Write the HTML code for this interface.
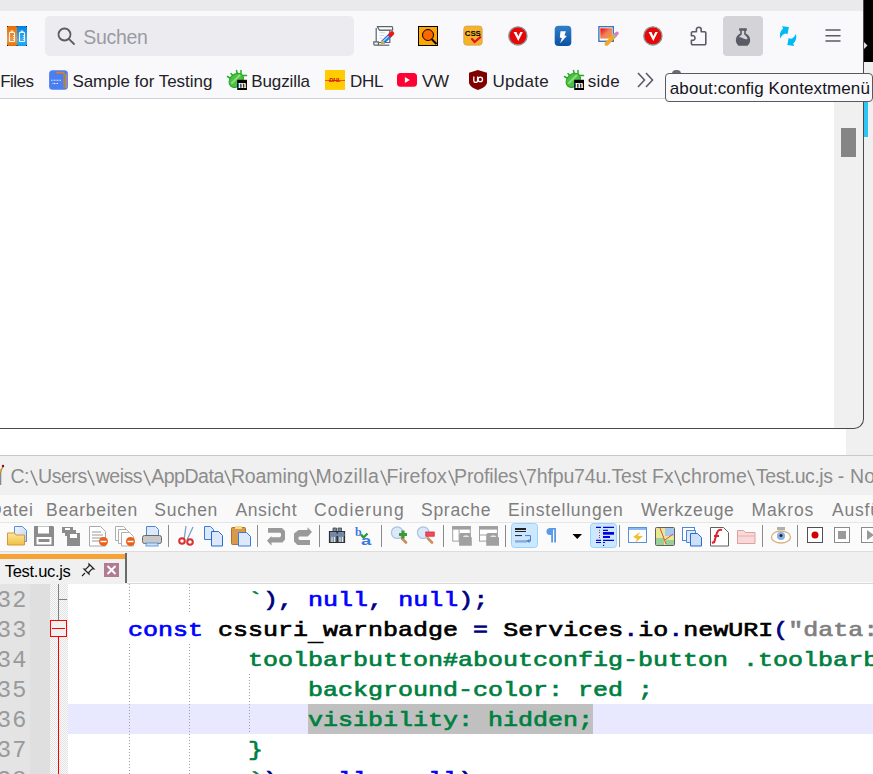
<!DOCTYPE html>
<html><head><meta charset="utf-8">
<style>
*{margin:0;padding:0;box-sizing:border-box}
html,body{width:873px;height:774px;overflow:hidden;background:#fff;position:relative;font-family:"Liberation Sans",sans-serif}
.a{position:absolute}
svg{position:absolute;overflow:visible}
#tabstrip{left:0;top:0;width:863px;height:11px;background:#eaeaed}
#toolbar{left:0;top:11px;width:863px;height:51px;background:#f9f9fb}
#bmbar{left:0;top:62px;width:863px;height:36px;background:#f9f9fb}
#sep{left:0;top:98px;width:863px;height:1px;background:#d0d0d6}
#content{left:0;top:99px;width:862px;height:329px;background:#fff}
#blk{left:863px;top:0;width:10px;height:62px;background:#000}
#rgray{left:863px;top:62px;width:10px;height:393px;background:#f0f0f0}
#below{left:846px;top:428px;width:27px;height:27px;background:#f0f0f0}
#scroll{left:834px;top:99px;width:29px;height:329px;background:#f0f0f0}
#thumb{left:841px;top:128px;width:15px;height:29px;background:#858585}
#winborder{left:-20px;top:-2px;width:884px;height:431px;border:1px solid #4a4a4a;border-radius:0 0 10px 0;border-top:none;border-left:none}
#search{left:45px;top:16px;width:309px;height:40px;background:#ececf0;border-radius:5px}
#suchen{top:26px;font-size:19.5px;color:#9a9aa4}
.bm{top:72px;font-size:17px;color:#222228;white-space:nowrap}
#hl{left:723px;top:16px;width:40px;height:40px;background:#d3d3d8;border-radius:4px}
#tip{left:665px;top:73px;width:208px;height:29px;background:#f9f9fb;border:1px solid #5a5a5a;border-radius:4px}
#tiptext{top:79px;font-size:17px;color:#15141a;white-space:nowrap}
#npp{left:0;top:455px;width:873px;height:319px;background:#f0f0f0}
#titleline{left:0;top:455px;width:873px;height:1px;background:#c8c8c8}
svg.bsv{position:static;display:inline-block;vertical-align:-3px;margin:0 0.5px}
.tt{top:465px;font-size:19.5px;color:#8c8c8c;white-space:nowrap}
#menubar{left:0;top:495px;width:873px;height:28px;background:#f9f9f9}
.mn{top:500px;font-size:17.5px;color:#7e7e7e;white-space:nowrap}
#tb{left:0;top:522px;width:873px;height:30px;background:#fbfbfb;border-top:1px solid #e6e6e6;border-bottom:1px solid #dddddd}
#tabbar{left:0;top:552px;width:873px;height:32px;background:#f0f0f0}
#tab{left:0;top:553px;width:127px;height:30px;background:#f0f0f0;border-right:2px solid #6a6a6a}
#orange{left:0;top:554px;width:125px;height:5px;background:#f6a234}
#tabtext{top:562px;font-size:16.5px;color:#000;white-space:nowrap}
#code{left:0;top:584px;width:873px;height:190px;background:#fff}
#lnm{left:0;top:584px;width:30px;height:190px;background:#e4e4e4}
#bkm{left:30px;top:584px;width:20px;height:190px;background:#dfdfdf}
#fold{left:50px;top:584px;width:18px;height:190px;background:repeating-conic-gradient(#fbfbfb 0 25%,#e2e2e2 0 50%) 0 0/2px 2px}
.ln{left:-3px;font-family:"Liberation Mono",monospace;font-size:23.5px;letter-spacing:1.2px;line-height:30px;color:#9a9a9a;width:30px;text-align:right;white-space:pre}
.cl{left:68px;font-family:"Liberation Mono",monospace;font-weight:normal;-webkit-text-stroke:0.8px;font-size:25px;line-height:30px;transform:scaleY(0.8);transform-origin:0 0;white-space:pre;color:#000}
.g{color:#008040}.n{color:#000080}.b{color:#0000ff}.s{color:#808080}
.guide{width:1px;background:repeating-linear-gradient(#a0a0a0 0 1px,transparent 1px 3px)}
.sepv{width:1px;height:22px;top:527px;background:#a0a0a0}
</style></head><body>
<div class="a" id="tabstrip"></div>
<div class="a" id="toolbar"></div>
<div class="a" id="bmbar"></div>
<div class="a" id="sep"></div>
<div class="a" id="content"></div>
<div class="a" id="scroll"></div>
<div class="a" id="thumb"></div>
<div class="a" id="blk"></div><svg style="left:864px;top:42px" width="4" height="7" viewBox="0 0 4 7"><path d="M0 0l3.5 3.5L0 7z" fill="#e0e0e0"/></svg>
<div class="a" id="rgray"></div>
<div class="a" style="left:864px;top:101px;width:4px;height:36px;background:#2ec4f6"></div>
<div class="a" id="below"></div>
<div class="a" id="winborder"></div>

<!-- toolbar -->
<svg style="left:7px;top:26px" width="20" height="20" viewBox="0 0 20 20">
 <defs><linearGradient id="go" x1="0" y1="0" x2="0" y2="1"><stop offset="0" stop-color="#e86e00"/><stop offset="0.7" stop-color="#e89a50"/><stop offset="1" stop-color="#e86e00"/></linearGradient>
 <linearGradient id="gb" x1="0" y1="0" x2="0" y2="1"><stop offset="0" stop-color="#0080e0"/><stop offset="0.7" stop-color="#40b0f0"/><stop offset="1" stop-color="#10a0f0"/></linearGradient></defs>
 <rect x="0" y="0" width="10" height="20" fill="url(#go)"/><rect x="10" y="0" width="10" height="20" fill="url(#gb)"/>
 <path d="M0 0h1v1H0zM19 0h1v1h-1zM0 19h1v1H0zM19 19h1v1h-1zM9.5 0h1v1h-1zM9.5 19h1v1h-1z" fill="#222"/>
 <path d="M2.5 6.5h5v9h-5zM4 6.5v-1.5h2v1.5M12.5 6.5h5v9h-5zM14 6.5v-1.5h2v1.5" fill="none" stroke="#fff" stroke-width="0.9"/>
 <path d="M6.5 9v.8M6.5 11v.8M6.5 13v.8M16.5 9v.8M16.5 11v.8M16.5 13v.8" stroke="#fff" stroke-width="0.9"/>
</svg>
<div class="a" id="search"></div>
<svg style="left:57px;top:27px" width="18" height="18" viewBox="0 0 18 18">
 <circle cx="7.5" cy="7.5" r="6" fill="none" stroke="#5b5b66" stroke-width="1.8"/><path d="M11.8 11.8L17 17" stroke="#5b5b66" stroke-width="1.8" stroke-linecap="round"/>
</svg>
<div class="a" id="suchen" style="left:83.30px;letter-spacing:-0.34px">Suchen</div>

<svg style="left:369px;top:22px" width="30" height="28" viewBox="0 0 30 28">
 <path d="M7.2 6V20.5H20.8V8.2H10" fill="#fafcfe" stroke="#5c646c" stroke-width="1.2"/>
 <path d="M8.3 4.6H22.8A0.9 0.9 0 0 1 23.6 5.5V8.2H10.5Z" fill="#fff" stroke="#5c646c" stroke-width="1.2" stroke-linejoin="round"/>
 <path d="M4.8 19.8H9.5V23.2H5.8A1.2 1.2 0 0 1 4.8 22Z" fill="#f0f2f4" stroke="#5c646c" stroke-width="1.2"/>
 <path d="M9.5 23.2H20.3" stroke="#5c646c" stroke-width="1.2"/>
 <path d="M10.5 10.7H16M10.5 13.5H15M10.5 16.2H13" stroke="#c8d0dc" stroke-width="0.9"/>
 <path d="M13.5 20.5L21.8 12.6" stroke="#2a78e0" stroke-width="4.4"/><path d="M13.8 19.6L21.2 12.6" stroke="#a0e0f8" stroke-width="1.2"/>
 <path d="M21.3 13L23 11.4" stroke="#e81818" stroke-width="4.4" stroke-linecap="round"/>
 <path d="M11.2 23L13.2 18.2L16.2 21.2Z" fill="#d8a848"/>
</svg>
<svg style="left:418px;top:26px" width="20" height="20" viewBox="0 0 20 20">
 <rect x="0.5" y="0.5" width="19" height="19" fill="#ffa500" stroke="#000"/>
 <circle cx="10" cy="9" r="5.5" fill="#ff6600" stroke="#000" stroke-width="1"/><path d="M13.5 13l5 5" stroke="#000" stroke-width="2"/>
</svg>
<svg style="left:459px;top:22px" width="30" height="28" viewBox="0 0 30 28">
 <rect x="4.7" y="4" width="18.5" height="19.2" rx="3" fill="#f5b428" stroke="#c89060" stroke-width="0.6"/>
 <text x="13.8" y="13.7" font-family="Liberation Sans" font-weight="bold" font-size="8" text-anchor="middle" fill="#000" letter-spacing="-0.2">CSS</text>
 <path d="M13 17L15.6 20L21.3 15.2" fill="none" stroke="#e01030" stroke-width="2.2" stroke-linecap="round"/>
</svg>
<svg style="left:504px;top:22px" width="30" height="28" viewBox="0 0 30 28">
 <circle cx="13.9" cy="13.9" r="9.1" fill="#e60808" stroke="#8a9292" stroke-width="1.3"/>
 <path d="M9.6 10.1H12.5L14.3 14.2L16.3 10.1H18.8L14.3 19Z" fill="#fff"/>
</svg>
<svg style="left:550px;top:22px" width="30" height="28" viewBox="0 0 30 28">
 <defs><linearGradient id="lg1" x1="0" y1="0" x2="0" y2="1"><stop offset="0" stop-color="#3080c8"/><stop offset="1" stop-color="#0a52a2"/></linearGradient></defs>
 <rect x="4.7" y="3.8" width="16.6" height="20.2" rx="3.8" fill="url(#lg1)"/>
 <path d="M10.5 9.2H15.9L14.5 13.4L16.8 14.1L10.1 21.3L11.9 15.9L9.8 15.6Z" fill="#fff"/>
</svg>
<svg style="left:594px;top:22px" width="30" height="28" viewBox="0 0 30 28">
 <defs><linearGradient id="lg2" x1="0" y1="0" x2="1" y2="1"><stop offset="0" stop-color="#f00000"/><stop offset="0.5" stop-color="#f08060"/><stop offset="1" stop-color="#f0a020"/></linearGradient></defs>
 <rect x="4.9" y="4.7" width="14.4" height="14.6" fill="#fff" stroke="#3c78b8" stroke-width="1.4"/>
 <rect x="6.3" y="6.3" width="11.8" height="10.3" fill="url(#lg2)"/>
 <path d="M12.5 21.8L21 13.3" stroke="#f0a828" stroke-width="4" stroke-linecap="round"/><path d="M21 13.3L23 11.3" stroke="#d080c0" stroke-width="3.6" stroke-linecap="round"/><path d="M19.8 14.5L21.2 13.1" stroke="#b0b0b0" stroke-width="4"/>
</svg>
<svg style="left:639px;top:22px" width="30" height="28" viewBox="0 0 30 28">
 <circle cx="13.9" cy="13.9" r="9.1" fill="#e60808" stroke="#8a9292" stroke-width="1.3"/>
 <path d="M9.6 10.1H12.5L14.3 14.2L16.3 10.1H18.8L14.3 19Z" fill="#fff"/>
</svg>
<svg style="left:684px;top:22px" width="30" height="28" viewBox="0 0 30 28">
 <path d="M8.6 9.8H12.4V7.6A2.4 2.4 0 0 1 17.2 7.6V9.8H20.6A1.2 1.2 0 0 1 21.8 11V21.6A1.2 1.2 0 0 1 20.6 22.8H8.6A1.2 1.2 0 0 1 7.4 21.6V18.2H9.6A2.4 2.4 0 0 0 9.6 13.8H7.4V11A1.2 1.2 0 0 1 8.6 9.8Z" fill="none" stroke="#5b5b66" stroke-width="1.6" stroke-linejoin="round"/>
</svg>
<div class="a" id="hl"></div>
<svg style="left:728px;top:22px" width="30" height="28" viewBox="0 0 30 28">
 <path d="M11.2 6.2H18.8V8.8H17.8V11.6A7.1 7.1 0 0 1 19.5 23.7H10.5A7.1 7.1 0 0 1 12.2 11.6V8.8H11.2Z" fill="#5b5b66"/>
 <path d="M13.8 8.8H16.2V12.6L17.4 13.4A5.3 5.3 0 0 1 19.6 16.8C18.5 17.6 17 17.4 15.5 16.6C13.5 15.6 11.8 15 10.8 15.4A5.3 5.3 0 0 1 12.6 13.4L13.8 12.6Z" fill="#d3d3d8"/>
</svg>
<svg style="left:773px;top:22px" width="30" height="28" viewBox="0 0 30 28">
 <g fill="#00b9f5"><path d="M7.2 16.5C6.3 12.5 7.3 8.8 10 6.6L9 4.3L15.9 5.1L14.5 12.3L12.8 11.4C10.5 11.6 8.5 13.5 7.2 16.5Z"/><path d="M7.2 16.5C6.3 12.5 7.3 8.8 10 6.6L9 4.3L15.9 5.1L14.5 12.3L12.8 11.4C10.5 11.6 8.5 13.5 7.2 16.5Z" transform="rotate(180 15.1 14.1)"/></g>
</svg>
<svg style="left:825px;top:29px" width="16" height="13" viewBox="0 0 16 13">
 <path d="M1 1.1h14M1 6.7h14M1 11.9h14" stroke="#5b5b66" stroke-width="1.5" stroke-linecap="round"/>
</svg>

<!-- bookmarks -->
<div class="a bm" id="b1" style="left:0.20px;letter-spacing:-0.55px">Files</div>
<svg style="left:44px;top:66px" width="28" height="28" viewBox="0 0 28 28">
 <rect x="5.1" y="4.2" width="18.8" height="19.5" rx="3.5" fill="#4a7ff2"/>
 <path d="M12 6.6H18.8A1.5 1.5 0 0 1 20.3 8.1V22" fill="none" stroke="#e8782a" stroke-width="1.6"/>
 <path d="M21.2 7.5V22.5" stroke="#5a8a2a" stroke-width="0.9"/><path d="M22.1 7.8V22.3" stroke="#d8c070" stroke-width="0.8"/><path d="M22.8 8.3V22" stroke="#c87090" stroke-width="0.6"/>
 <path d="M7 14.3h10M8.5 17.5h6" stroke="#dfe8ff" stroke-width="1.1" stroke-dasharray="1 0.5"/>
</svg>
<div class="a bm" id="b2" style="left:72.40px;letter-spacing:-0.03px">Sample for Testing</div>
<svg style="left:220px;top:64px" width="30" height="30" viewBox="0 0 30 30">
 <g stroke="#22b022" stroke-width="1.5" stroke-linecap="round"><path d="M7.5 12.5L11.5 15"/><path d="M11 9.5L13.5 12.5"/><path d="M16.5 6.5L17.5 10.5"/><path d="M21 6.5V10"/><path d="M26.5 11.5H22.5"/></g>
 <ellipse cx="16.2" cy="16.3" rx="8" ry="6.2" transform="rotate(-45 16.2 16.3)" fill="#4cc040" stroke="#22a022" stroke-width="1"/>
 <path d="M12 19L19.5 11.5" stroke="#9ee090" stroke-width="2.2" stroke-linecap="round" opacity="0.8"/>
 <rect x="17.2" y="15.8" width="9.8" height="10.2" fill="#000"/>
 <text x="22.1" y="24" font-family="Liberation Serif" font-weight="bold" font-size="10" text-anchor="middle" fill="#fff">m</text>
</svg>
<div class="a bm" id="b3" style="left:251.20px;letter-spacing:-0.10px">Bugzilla</div>
<svg style="left:320px;top:66px" width="28" height="28" viewBox="0 0 28 28">
 <rect x="5" y="4" width="20" height="19.9" fill="#ffcc00"/>
 <path d="M5 14.5H25" stroke="#e85818" stroke-width="1"/>
 <text x="14.8" y="15.6" font-family="Liberation Sans" font-weight="bold" font-style="italic" font-size="6" text-anchor="middle" fill="#d40511" letter-spacing="-0.3">DHL</text>
</svg>
<div class="a bm" id="b4" style="left:350px;letter-spacing:-0.3px">DHL</div>
<svg style="left:393px;top:66px" width="28" height="28" viewBox="0 0 28 28">
 <rect x="4" y="6.9" width="20" height="13.9" rx="3.5" fill="#ff0033"/><path d="M11.9 10.9L16.8 13.9L11.9 17Z" fill="#fff"/>
</svg>
<div class="a bm" id="b5" style="left:422px;letter-spacing:-0.3px">VW</div>
<svg style="left:464px;top:66px" width="28" height="28" viewBox="0 0 28 28">
 <path d="M13.9 4L23 6.7V16.3C23 19.5 19 22.5 13.9 23.9C8.8 22.5 5 19.5 5 16.3V6.7Z" fill="#800000"/>
 <path d="M9.8 10.5V14.5A1.9 1.9 0 0 0 13.6 14.5V10.5" fill="none" stroke="#fff" stroke-width="1.3"/><circle cx="16.3" cy="13.4" r="2.2" fill="none" stroke="#fff" stroke-width="1.3"/>
</svg>
<div class="a bm" id="b6" style="left:492.40px;letter-spacing:0.32px">Update</div>
<svg style="left:557px;top:64px" width="30" height="30" viewBox="0 0 30 30">
 <g stroke="#22b022" stroke-width="1.5" stroke-linecap="round"><path d="M7.5 12.5L11.5 15"/><path d="M11 9.5L13.5 12.5"/><path d="M16.5 6.5L17.5 10.5"/><path d="M21 6.5V10"/><path d="M26.5 11.5H22.5"/></g>
 <ellipse cx="16.2" cy="16.3" rx="8" ry="6.2" transform="rotate(-45 16.2 16.3)" fill="#4cc040" stroke="#22a022" stroke-width="1"/>
 <path d="M12 19L19.5 11.5" stroke="#9ee090" stroke-width="2.2" stroke-linecap="round" opacity="0.8"/>
 <rect x="17.2" y="15.8" width="9.8" height="10.2" fill="#000"/>
 <text x="22.1" y="24" font-family="Liberation Serif" font-weight="bold" font-size="10" text-anchor="middle" fill="#fff">m</text>
</svg>
<div class="a bm" id="b7" style="left:587.70px;letter-spacing:0.24px">side</div>
<svg style="left:637px;top:72px" width="17" height="16" viewBox="0 0 17 16">
 <path d="M1 1l6.5 7L1 15M9 1l6.5 7L9 15" fill="none" stroke="#5b5b66" stroke-width="1.6"/>
</svg>
<div class="a" style="left:672px;top:70px;width:9px;height:6px;border-radius:4px 4px 0 0;background:#6a6a72"></div>
<div class="a" id="tip"></div><div class="a" id="tiptext" style="left:669.80px;letter-spacing:0.11px">about:config Kontextmenü</div>

<!-- notepad++ -->
<div class="a" id="npp"></div>
<div class="a" id="titleline"></div>
<svg style="left:0;top:460px" width="6" height="30" viewBox="0 0 6 30"><path d="M0.6 12V25" stroke="#8a8a8a" stroke-width="1.4"/><path d="M3.2 6.5L0.8 10.5" stroke="#8090a8" stroke-width="1.3"/><circle cx="0.6" cy="10.8" r="1.6" fill="#f0a010"/><circle cx="3" cy="6" r="1.2" fill="#a00000"/></svg>
<div class="a tt" id="t1" style="left:10.50px;letter-spacing:-0.464px">C:<svg class="bsv" width="8" height="16" viewBox="0 0 8 16"><path d="M0.8 0.5L7.2 15.5" stroke="#8a8a8a" stroke-width="1.6"/></svg>Users<svg class="bsv" width="8" height="16" viewBox="0 0 8 16"><path d="M0.8 0.5L7.2 15.5" stroke="#8a8a8a" stroke-width="1.6"/></svg>weiss<svg class="bsv" width="8" height="16" viewBox="0 0 8 16"><path d="M0.8 0.5L7.2 15.5" stroke="#8a8a8a" stroke-width="1.6"/></svg>AppData<svg class="bsv" width="8" height="16" viewBox="0 0 8 16"><path d="M0.8 0.5L7.2 15.5" stroke="#8a8a8a" stroke-width="1.6"/></svg></div><div class="a tt" id="t1b" style="left:230.90px;letter-spacing:-0.110px">Roaming<svg class="bsv" width="8" height="16" viewBox="0 0 8 16"><path d="M0.8 0.5L7.2 15.5" stroke="#8a8a8a" stroke-width="1.6"/></svg></div><div class="a tt" id="t2" style="left:315.40px;letter-spacing:0.448px">Mozilla<svg class="bsv" width="8" height="16" viewBox="0 0 8 16"><path d="M0.8 0.5L7.2 15.5" stroke="#8a8a8a" stroke-width="1.6"/></svg></div><div class="a tt" id="t2b" style="left:386.40px;letter-spacing:0.147px">Firefox<svg class="bsv" width="8" height="16" viewBox="0 0 8 16"><path d="M0.8 0.5L7.2 15.5" stroke="#8a8a8a" stroke-width="1.6"/></svg></div><div class="a tt" id="t3" style="left:454.00px;letter-spacing:-0.129px">Profiles<svg class="bsv" width="8" height="16" viewBox="0 0 8 16"><path d="M0.8 0.5L7.2 15.5" stroke="#8a8a8a" stroke-width="1.6"/></svg></div><div class="a tt" id="t3b" style="left:526.00px;letter-spacing:-0.144px">7hfpu74u.Test Fx<svg class="bsv" width="8" height="16" viewBox="0 0 8 16"><path d="M0.8 0.5L7.2 15.5" stroke="#8a8a8a" stroke-width="1.6"/></svg></div><div class="a tt" id="t4" style="left:681.10px;letter-spacing:0.130px">chrome<svg class="bsv" width="8" height="16" viewBox="0 0 8 16"><path d="M0.8 0.5L7.2 15.5" stroke="#8a8a8a" stroke-width="1.6"/></svg></div><div class="a tt" id="t4b" style="left:756.00px;letter-spacing:-0.485px">Test.uc.js</div><div class="a tt" id="t5" style="left:837.80px;letter-spacing:0.160px">- Notepad++</div>
<div class="a" id="menubar"></div>
<div class="a mn" id="m0" style="left:-11px;letter-spacing:0.78px">Datei</div>
<div class="a mn" id="m1" style="left:46.00px;letter-spacing:0.72px">Bearbeiten</div>
<div class="a mn" id="m2" style="left:154.30px;letter-spacing:0.74px">Suchen</div>
<div class="a mn" id="m3" style="left:235.40px;letter-spacing:0.62px">Ansicht</div>
<div class="a mn" id="m4" style="left:314.00px;letter-spacing:1.12px">Codierung</div>
<div class="a mn" id="m5" style="left:421.00px;letter-spacing:0.72px">Sprache</div>
<div class="a mn" id="m6" style="left:508px;letter-spacing:0.8px">Einstellungen</div>
<div class="a mn" id="m7" style="left:641.00px;letter-spacing:0.57px">Werkzeuge</div>
<div class="a mn" id="m8" style="left:751.50px;letter-spacing:0.90px">Makros</div>
<div class="a mn" id="m9" style="left:832px;letter-spacing:0.78px">Ausführen</div>
<div class="a" id="tb"></div>
<svg style="left:0;top:522px" width="873" height="30" viewBox="0 522 873 30">
<defs>
 <linearGradient id="fold" x1="0" y1="0" x2="0" y2="1"><stop offset="0" stop-color="#fbe7a0"/><stop offset="1" stop-color="#f0c040"/></linearGradient>
 <linearGradient id="blu" x1="0" y1="0" x2="1" y2="1"><stop offset="0" stop-color="#f0f6fe"/><stop offset="1" stop-color="#b9d4f4"/></linearGradient>
</defs>
<!-- open -->
<path d="M14.5 526.5h8l4 4v11h-12z" fill="url(#blu)" stroke="#5a8ed8"/>
<path d="M7.5 533h7l1.5 2h8.5v10h-17z" fill="url(#fold)" stroke="#e0923a"/>
<!-- save -->
<path d="M34 526h19l1 1v19H34z" fill="#8c8c8c"/><rect x="38" y="526.5" width="11" height="7" fill="#fff"/><rect x="36.5" y="537" width="15" height="7.5" fill="#fff"/><rect x="38.5" y="539" width="11" height="3" fill="#8c8c8c"/>
<!-- save all -->
<path d="M62 527h11v6h-11z" fill="#8c8c8c"/><path d="M65 530h11v6h-11z" fill="#8c8c8c"/><path d="M67 533h13v13H67z" fill="#8c8c8c"/><rect x="70" y="534" width="7" height="4" fill="#fff"/><rect x="65" y="528" width="5" height="2" fill="#fff"/>
<!-- close -->
<path d="M89.5 526.5h11l5 5v14.5h-16z" fill="#fff" stroke="#a8a8a8"/><path d="M92 532h9M92 535h11M92 538h11M92 541h7" stroke="#9a9a9a" stroke-width="1.2"/>
<circle cx="103.5" cy="541.5" r="4.5" fill="#e8601a"/><path d="M100.5 541.5h6" stroke="#fff" stroke-width="1.5"/>
<!-- close all -->
<path d="M115.5 526.5h8l3 3v11h-11z" fill="#fff" stroke="#b0b0b0"/><path d="M118.5 529.5h8l3 3v11h-11z" fill="#fff" stroke="#b0b0b0"/><path d="M121.5 532.5h8l4 4v9.5h-12z" fill="#fff" stroke="#b0b0b0"/>
<circle cx="130.5" cy="541.5" r="4.5" fill="#e8601a"/><path d="M127.5 541.5h6" stroke="#fff" stroke-width="1.5"/>
<!-- print -->
<path d="M146.5 526.5h9l3 3v6h-12z" fill="#dbe9fb" stroke="#4a88d8"/><rect x="142.5" y="535.5" width="19" height="8" rx="2" fill="#c8c8c8" stroke="#6a6a6a"/><rect x="146" y="543" width="12" height="3" fill="#cde0f8" stroke="#4a88d8" stroke-width="0.8"/>
<!-- sep -->
<path d="M168.5 525v22M257.5 525v22M319.5 525v22M381.5 525v22M443.5 525v22M505.5 525v22M619.5 525v22M762.5 525v22M797.5 525v22" stroke="#8a8a8a"/>
<!-- cut -->
<path d="M186 526l-2 14M193 527l-6 13" stroke="#7aa0d0" stroke-width="1.3"/><circle cx="182" cy="541" r="2.8" fill="none" stroke="#d83030" stroke-width="2"/><circle cx="190" cy="542" r="2.8" fill="none" stroke="#d83030" stroke-width="2"/>
<!-- copy -->
<path d="M204.5 526.5h6l3 3v10h-9z" fill="#dbe9fb" stroke="#3a7ad8"/><path d="M211.5 531.5h7l4 4v10.5h-11z" fill="#dbe9fb" stroke="#2a6ad0"/>
<!-- paste -->
<rect x="231.5" y="527.5" width="14" height="17" rx="1" fill="#d89a48" stroke="#b07030"/><rect x="235" y="526" width="7" height="3" fill="#f6d890"/><path d="M238.5 532.5h8l4 4v9.5h-12z" fill="#dbe9fb" stroke="#3a7ad8"/>
<!-- undo -->
<path d="M268 528H282L285 531V539.5L282.5 542.5H271.5V545.7L267 540.8L271.4 536V537.2H280L281 536V533.5L280 532.8H268Z" fill="#9a9a9a"/>
<!-- redo -->
<path d="M298.5 530H307.5V527.2L312 532L307.5 536.8V536.4H299.5L298.5 537.5V539L299.5 540H310V545H297.5L294 541.5V533.5Z" fill="#9a9a9a"/>
<!-- find -->
<path d="M333 528h3.5v3.5h-3.5zM338 528h3.5v3.5h-3.5z" fill="#7a8896" stroke="#404a54" stroke-width="0.8"/>
<path d="M329.5 531.5h7.5v11h-7.5zM337.5 531.5h7v11h-7z" fill="#7e8c9a" stroke="#2a3038" stroke-width="1.2"/>
<path d="M330 533.5h14.5v2.5h-14.5z" fill="#6a88b0"/><path d="M332 537v5M334.5 537v5M340 537v5M342.5 537v5" stroke="#e0e6ec" stroke-width="1.1"/>
<!-- replace -->
<text x="355" y="535.5" font-family="Liberation Serif" font-weight="bold" font-size="12" fill="#3a7ae0">b</text>
<path d="M361 534.5l2.5 3 4-4" stroke="#2a9a3a" stroke-width="2.4" fill="none"/>
<text x="361" y="545.5" font-family="Liberation Sans" font-weight="bold" font-size="16" fill="#3a7ae0" transform="translate(361 545.5) scale(1.15 0.85) translate(-361 -545.5)">a</text>
<!-- zoom in -->
<circle cx="397.2" cy="532.6" r="5.8" fill="#dce9f8" stroke="#a8c4e4" stroke-width="1.2"/><path d="M402 538.5l4 4" stroke="#c89060" stroke-width="2.8" stroke-linecap="round"/><path d="M403 530.5v8M399 534.5h8" stroke="#3a9a3a" stroke-width="3.2"/>
<!-- zoom out -->
<circle cx="423.2" cy="532.6" r="5.8" fill="#dce9f8" stroke="#a8c4e4" stroke-width="1.2"/><path d="M428 538.5l4 4" stroke="#c89060" stroke-width="2.8" stroke-linecap="round"/><rect x="425.8" y="532" width="8.4" height="4.2" fill="#e85060" stroke="#e02030" stroke-width="0.8"/>
<!-- sync v -->
<rect x="452.7" y="526.6" width="17.6" height="14.5" fill="#fff" stroke="#a0a0a0" stroke-width="1"/><rect x="452.2" y="526.1" width="18.6" height="3.5" fill="#a0a0a0"/><path d="M459.1 529.6v12" stroke="#a0a0a0"/>
<path d="M460.5 533H470.5V537.3H471.8V545.7H459.1V534.4Z" fill="#a0a0a0"/><path d="M462.8 536.8a3.5 2 0 0 1 6.5 0z" fill="#fff"/>
<!-- sync h -->
<rect x="479.5" y="526.6" width="17.9" height="14.5" fill="#fff" stroke="#a0a0a0" stroke-width="1"/><rect x="479" y="526.1" width="18.9" height="3.5" fill="#a0a0a0"/><path d="M479.5 535h8" stroke="#a0a0a0" stroke-width="1"/>
<path d="M487.6 533H497.4V537.3H499V545.7H486.2V534.4Z" fill="#a0a0a0"/><path d="M490 536.8a3.5 2 0 0 1 6.5 0z" fill="#fff"/>
<!-- sep2 -->
<!-- wrap hl -->
<rect x="511.5" y="523.5" width="26" height="24" rx="3" fill="#cce8ff" stroke="#99d1ff"/>
<path d="M515 529h11" stroke="#222" stroke-width="2"/><path d="M515 531.5h11" stroke="#222" stroke-width="1"/><path d="M515 535.6h7" stroke="#222" stroke-width="1"/>
<path d="M525 535.6h5.5v5.5h-5" fill="none" stroke="#4a7ad0" stroke-width="1"/><path d="M529.5 539l-3 2 3 2z" fill="#4a7ad0"/>
<rect x="515" y="540.2" width="12" height="2.4" fill="#88aae0"/>
<!-- pilcrow -->
<path d="M550 528h6v14.6h-1.8v-12.8h-1.2v12.8H551.2v-7.6H550a3.5 3.5 0 0 1 0-7z" fill="#5a9ae6"/>
<!-- dropdown -->
<path d="M572.5 534h9.5l-4.75 5z" fill="#000"/>
<!-- indent guide hl -->
<rect x="590.5" y="523.5" width="26" height="24" rx="3" fill="#cce8ff" stroke="#99d1ff"/>
<g stroke="#0000e0" stroke-width="1.2"><path d="M596 527.4h5M603 527.4h11M603 530.4h5M596 540.3h5M603 540.3h11M596 542.5h5M603 542.5h2"/></g>
<rect x="603" y="532" width="11" height="2.7" fill="#0000e0"/><rect x="603" y="536" width="7" height="2" fill="#0000e0"/><rect x="603" y="544.8" width="1.2" height="1.2" fill="#0000e0"/>
<g fill="#e02020"><rect x="599" y="529.8" width="1" height="1"/><rect x="599" y="532" width="1" height="1"/><rect x="599" y="535" width="1" height="1"/><rect x="599" y="537" width="1" height="1"/></g>
<!-- panel -->
<rect x="628.5" y="527.5" width="18" height="15" fill="#fff" stroke="#5a90d8"/><rect x="629" y="528" width="17" height="2" fill="#8ab8f0"/><path d="M633 537l7-5-2 4h5l-8 7 2-4z" fill="#f0c030"/>
<!-- map -->
<rect x="655.5" y="527.5" width="19" height="18" rx="1" fill="#e8e890" stroke="#606060"/><path d="M665 528v8h9v-8z" fill="#a8c8f0"/><path d="M656 538h8v7h-8zM666 540h8v5h-8z" fill="#98d098"/><path d="M660 528l6 16M665 540l8-6" stroke="#e04848" stroke-width="1"/>
<!-- doc list -->
<rect x="682.5" y="527.5" width="12" height="13" fill="#fff" stroke="#4a88d8"/><path d="M686.5 530.5h9v12h-9z" fill="#dbe9fb" stroke="#4a88d8"/><path d="M690.5 533.5h7l4 4v8.5h-11z" fill="#cde0f8" stroke="#2a6ad0"/>
<!-- function list -->
<path d="M710.5 527.5h13l5 5v13.5h-18z" fill="#fff" stroke="#606060"/><path d="M722 530c-4-1-5 2-6 6l-2 7M712 543l2-1M714 536h5" fill="none" stroke="#e02030" stroke-width="2"/>
<!-- folder -->
<path d="M737.5 530.5h6l2 2h9.5v11h-17.5z" fill="#f8d8d8" stroke="#e0a0a0"/><path d="M738 536h17" stroke="#e8b0b0"/>
<!-- eye -->
<ellipse cx="781" cy="537" rx="9.5" ry="6" fill="#fff" stroke="#d8b080" stroke-width="1.3"/><circle cx="781" cy="536" r="4" fill="#8aaee0"/><circle cx="781" cy="535.5" r="1.5" fill="#223"/><rect x="777" y="527" width="8" height="3" fill="#b0b0b0"/>
<!-- record -->
<rect x="807.5" y="527.5" width="15" height="15" fill="#fff" stroke="#505050"/><circle cx="815" cy="535" r="3.5" fill="#d00000"/>
<!-- stop -->
<rect x="834.5" y="527.5" width="15" height="15" fill="#fff" stroke="#8a8a8a"/><rect x="838" y="531" width="8" height="8" fill="#9a9a9a"/>
<!-- play -->
<rect x="861.5" y="527.5" width="15" height="15" fill="#fff" stroke="#8a8a8a"/><path d="M867 530l7 5-7 5z" fill="#9a9a9a"/>
</svg>

<div class="a" id="tabbar"></div>
<div class="a" id="tab"></div>
<div class="a" id="orange"></div>
<div class="a" id="tabtext" style="left:4.80px;letter-spacing:-0.30px">Test.uc.js</div>
<svg style="left:81px;top:563px" width="14" height="14" viewBox="0 0 14 14"><path d="M8 1l5 5-2 0-3 3 0 2-5-5 2 0 3-3zM4 10l-3 3" fill="none" stroke="#222" stroke-width="1.2"/></svg>
<svg style="left:104px;top:563px" width="15" height="14" viewBox="0 0 15 14"><rect width="15" height="14" fill="#b07a90"/><path d="M3.5 3l8 8M11.5 3l-8 8" stroke="#fff" stroke-width="2"/></svg>

<div class="a" id="code"></div>
<div class="a" style="left:127px;top:582px;width:746px;height:1px;background:#fafafa"></div><div class="a" style="left:127px;top:583px;width:746px;height:1px;background:#d8d8d8"></div>
<div class="a" style="left:68px;top:704px;width:805px;height:30px;background:#e8e8ff"></div>
<div class="a" style="left:308px;top:704px;width:285px;height:30px;background:#c0c0c0"></div>
<div class="a" id="lnm"></div>
<div class="a" id="bkm"></div>
<div class="a" id="fold"></div>
<div class="a ln" style="top:586px">32
33
34
35
36
37
38</div>
<!-- fold markers -->
<div class="a" style="left:58px;top:584px;width:1px;height:36px;background:#808080"></div>
<div class="a" style="left:58px;top:599px;width:9px;height:1px;background:#808080"></div>
<div class="a" style="left:50px;top:620px;width:17px;height:17px;border:1px solid #ff0000;background:#f0f0f0"></div>
<div class="a" style="left:52px;top:628px;width:13px;height:1px;background:#ff0000"></div>
<div class="a" style="left:58px;top:637px;width:1px;height:137px;background:#ff0000"></div>
<!-- indent guides -->
<div class="a guide" style="left:129px;top:584px;height:30px"></div>
<div class="a guide" style="left:189px;top:584px;height:30px"></div>
<div class="a guide" style="left:129px;top:644px;height:130px"></div>
<div class="a guide" style="left:189px;top:644px;height:130px"></div>
<div class="a guide" style="left:249px;top:674px;height:60px"></div>

<div class="a cl" style="top:589px">            <span class="g">`</span><span class="n">),</span> <span class="b">null</span><span class="n">,</span> <span class="b">null</span><span class="n">);</span></div>
<div class="a cl" style="top:619px">    <span class="b">const</span> cssuri<span style="position:relative;top:7px">_</span>warnbadge <span class="n">=</span> Services<span class="n">.</span>io<span class="n">.</span>newURI<span class="n">(</span><span class="s">"data:text/css;charset=utf-8,"</span></div>
<div class="a cl g" style="top:649px">            toolbarbutton#aboutconfig-button .toolbarbutton-badge {</div>
<div class="a cl g" style="top:679px">                background-color: red ;</div>
<div class="a cl g" style="top:709px">                visibility: hidden;</div>
<div class="a cl g" style="top:739px">            }</div>
<div class="a cl" style="top:769px">            <span class="g">`</span><span class="n">),</span> <span class="b">null</span><span class="n">,</span> <span class="b">null</span><span class="n">);</span></div>
</body></html>
